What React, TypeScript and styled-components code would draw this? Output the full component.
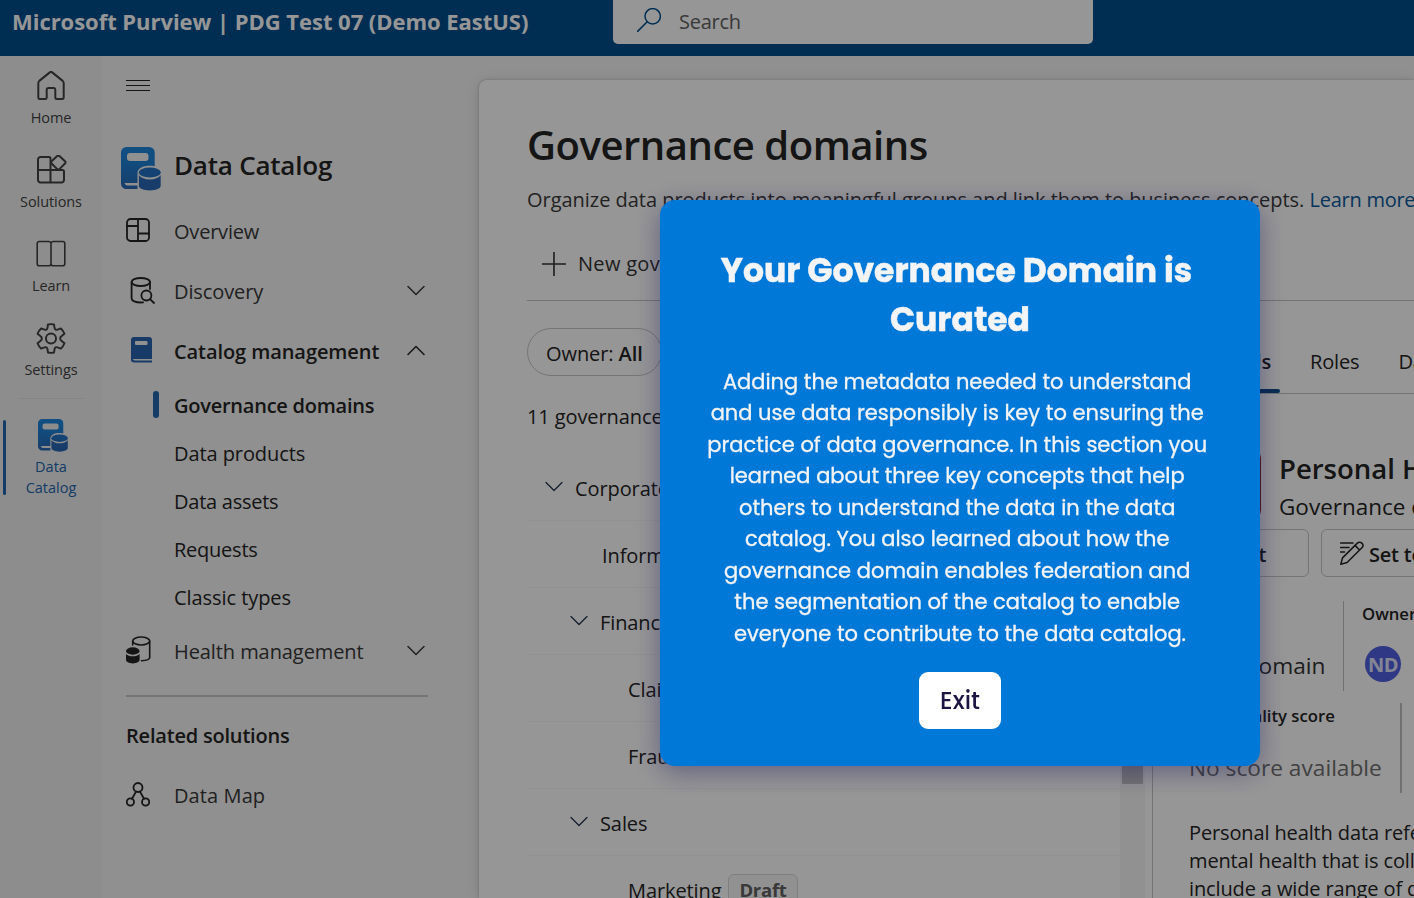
import React from 'react';
import styled, { createGlobalStyle, css } from 'styled-components';

const GlobalStyle = createGlobalStyle`
  *, *::before, *::after { box-sizing: border-box; }
  html, body { margin: 0; height: 100%; overflow: hidden; }
  body {
    font-family: "Segoe UI", "Open Sans", "Noto Sans", sans-serif;
    font-size: 20px;
    color: #242424;
    background: #f5f5f5;
  }
  svg { display: block; flex: none; }
`;

const Page = styled.div`
  display: flex;
  flex-direction: column;
  width: 1414px;
  height: 898px;
  overflow: hidden;
  white-space: nowrap;
`;

/* ---------- header ---------- */

const Header = styled.header`
  display: flex;
  align-items: flex-start;
  flex: none;
  height: 56px;
  padding-left: 12px;
  background: #004e8c;
`;

const Brand = styled.div`
  width: 601px;
  font-size: 22px;
  font-weight: 700;
  line-height: 42px;
  letter-spacing: -0.04px;
  color: #fff;
`;

const SearchBox = styled.div`
  display: flex;
  align-items: center;
  gap: 18px;
  width: 480px;
  height: 44px;
  padding: 0 24px;
  border-radius: 0 0 5px 5px;
  background: #fff;
  color: #616161;
  letter-spacing: -0.25px;

  svg { color: #004e8c; margin-top: -4px; }
  span { margin-top: -2px; }
`;

/* ---------- rail ---------- */

const Body = styled.div`
  display: flex;
  flex: 1;
  min-height: 0;
`;

const Rail = styled.nav`
  display: flex;
  flex-direction: column;
  align-items: center;
  flex: none;
  width: 102px;
  padding-top: 15px;
  background: #f0f0f0;
`;

const RailItem = styled.div`
  display: flex;
  flex-direction: column;
  align-items: center;
  flex: none;
  width: 100%;
  height: 84px;
  font-size: 14.5px;
  line-height: 21px;
  letter-spacing: -0.08px;
  color: #424242;

  svg { margin-bottom: 5px; }
`;

const RailDivider = styled.div`
  flex: none;
  width: 66px;
  height: 1px;
  margin: -9px 0 21px;
  background: #e2e2e2;
`;

const RailActive = styled.div`
  display: flex;
  flex: none;
  width: 100%;
  height: 76px;
  padding-left: 3px;
`;

const RailMarker = styled.div`
  width: 3px;
  height: 75px;
  border-radius: 2px;
  background: #2266ad;
`;

const RailActiveContent = styled.div`
  display: flex;
  flex-direction: column;
  align-items: center;
  flex: 1;
  padding-right: 6px;
  font-size: 14.5px;
  line-height: 21px;
  text-align: center;
  white-space: pre-line;
  color: #2266ad;

  svg { margin: -1px 0 4px 4px; }
`;

/* ---------- side navigation ---------- */

const SideNav = styled.nav`
  flex: none;
  width: 377px;
  padding: 24px 51px 0 24px;
`;

const Product = styled.div`
  display: flex;
  align-items: center;
  gap: 13px;
  height: 44px;
  margin: 55px 0 10px -5px;
  font-size: 26px;
  font-weight: 600;
  letter-spacing: -0.22px;

  span { margin-top: -8px; }
`;

const NavRow = styled.div<{ $bold?: boolean; $spacing?: number }>`
  display: flex;
  align-items: center;
  height: 60px;
  padding-right: 3px;
  font-weight: ${(p) => (p.$bold ? 600 : 400)};
  letter-spacing: ${(p) => p.$spacing ?? 0}px;
  color: ${(p) => (p.$bold ? '#242424' : '#383838')};
`;

const NavIcon = styled.div<{ $shift?: number }>`
  flex: none;
  width: 48px;
  padding-left: ${(p) => p.$shift ?? 0}px;
  margin-top: -2px;
  color: #242424;
`;

const NavLabel = styled.div`
  flex: 1;
`;

const ChevronSlot = styled.div`
  margin-top: -2px;
`;

const SubRow = styled.div<{ $active?: boolean; $spacing?: number }>`
  display: flex;
  align-items: center;
  height: 48px;
  padding-left: ${(p) => (p.$active ? 27 : 48)}px;
  font-weight: ${(p) => (p.$active ? 600 : 400)};
  letter-spacing: ${(p) => p.$spacing ?? 0}px;
`;

const SubMarker = styled.div`
  width: 6px;
  height: 27px;
  margin: -2px 15px 0 0;
  border-radius: 3px;
  background: #2266ad;
`;

const NavDivider = styled.div`
  width: 302px;
  height: 2px;
  margin: 14px 0 8px;
  background: #c8c8c8;
`;

/* ---------- main card ---------- */

const Card = styled.main`
  flex: 1;
  min-width: 0;
  margin-top: 24px;
  padding: 37px 0 0 48px;
  border-top-left-radius: 8px;
  background: #fff;
  box-shadow: 0 0 3px rgba(0, 0, 0, 0.22), 0 2px 14px rgba(0, 0, 0, 0.13);
  overflow: hidden;
`;

const CardTitle = styled.h1`
  margin: 0;
  font-size: 40px;
  font-weight: 600;
  line-height: 56px;
  letter-spacing: -0.47px;
`;

const Intro = styled.p`
  margin: 12px 0 0;
  line-height: 30px;
  letter-spacing: -0.03px;
  color: #3a3a3a;

  a { color: #0b5a9d; letter-spacing: -0.25px; }
`;

const Toolbar = styled.div`
  display: flex;
  align-items: center;
  gap: 12px;
  height: 86px;
  padding: 26px 0 13px 15px;
  border-bottom: 1px solid #c4c4c4;
  letter-spacing: 0.3px;
  color: #333;

  span { margin-top: -2px; }
`;

const Columns = styled.div`
  display: flex;
  height: 597px;
`;

const ListPane = styled.section`
  flex: none;
  width: 593px;
  padding-top: 27px;
`;

const FilterPill = styled.div`
  display: inline-flex;
  align-items: center;
  height: 48px;
  padding: 3px 18px 0;
  border: 1px solid #c8c8c8;
  border-radius: 24px;
  line-height: 30px;
  letter-spacing: -0.08px;

  b { margin-left: 5px; font-weight: 600; }
`;

const Count = styled.div`
  margin: 26px 0 22px;
  line-height: 30px;
  letter-spacing: -0.1px;
`;

const TreeRow = styled.div<{ $indent: number }>`
  display: flex;
  align-items: center;
  gap: 12px;
  height: 67px;
  padding: 2px 0 0 ${(p) => p.$indent}px;
  border-bottom: 1px solid #f6f6f6;
  letter-spacing: -0.1px;
`;

const TreeChevron = styled.div`
  margin-top: -3px;
  color: #1c2f48;
`;

const TreeTag = styled.div`
  height: 33px;
  margin: 1px 0 0 -5px;
  padding: 0 10px;
  border: 1px solid #d8d8d8;
  border-radius: 6px;
  background: #f7f7f7;
  color: #616161;
  font-size: 18.5px;
  font-weight: 700;
  line-height: 29px;
  letter-spacing: -0.25px;
`;

const ScrollTrack = styled.div`
  flex: none;
  width: 25px;
  padding: 150px 2px 0;
  background: #f7f7f7;
`;

const ScrollThumb = styled.div`
  height: 333px;
  background: #c2c2c2;
`;

/* ---------- details pane ---------- */

const Details = styled.section`
  flex: none;
  width: 500px;
  margin-left: 7px;
  border-left: 1px solid #c4c4c4;
  padding-left: 36px;
`;

const Tabs = styled.div`
  display: flex;
  gap: 39px;
  height: 93px;
  padding: 36px 0 0 8px;
  border-bottom: 1px solid #c4c4c4;
  letter-spacing: -0.15px;
`;

const Tab = styled.div<{ $active?: boolean }>`
  position: relative;
  height: 56px;
  line-height: 50px;
  font-weight: ${(p) => (p.$active ? 600 : 400)};
  ${(p) =>
    p.$active &&
    css`
      width: 74px;
      text-align: right;
      &::after {
        content: '';
        position: absolute;
        left: -8px;
        right: -9px;
        bottom: 0;
        height: 4px;
        border-radius: 2px;
        background: #0f4c8c;
      }
    `}
`;

const Entity = styled.div`
  display: flex;
  gap: 18px;
  margin-top: 54px;
  height: 72px;
`;

const EntityIcon = styled.div`
  width: 72px;
  height: 72px;
  border-radius: 10px;
  background: #a4262c;
`;

const EntityName = styled.div`
  margin-top: 2px;
  font-size: 27.5px;
  font-weight: 600;
  line-height: 38px;
`;

const EntityType = styled.div`
  font-size: 22.5px;
  line-height: 38px;
`;

const Actions = styled.div`
  display: flex;
  gap: 12px;
  margin-top: 9px;
`;

const ActionButton = styled.div<{ $width: number; $tight?: boolean }>`
  display: flex;
  align-items: center;
  gap: 5px;
  width: ${(p) => p.$width}px;
  height: 48px;
  padding: 0 0 0 ${(p) => (p.$tight ? 11 : 18)}px;
  border: 1px solid #c8c8c8;
  border-radius: 6px;
  font-weight: 600;
  letter-spacing: -0.2px;

  svg { margin-top: -1px; }
  span { padding-top: 3px; }
`;

const Facts = styled.div`
  display: flex;
  height: 90px;
`;

const Fact = styled.div<{ $width: number; $rule: number }>`
  width: ${(p) => p.$width}px;
  border-right: ${(p) => p.$rule}px solid #c0c0c0;
`;

const FactLabel = styled.div`
  font-size: 16.7px;
  font-weight: 600;
  line-height: 26px;
`;

const FactValue = styled.div<{ $muted?: boolean }>`
  margin-top: 24px;
  font-size: 22.7px;
  line-height: 30px;
  color: ${(p) => (p.$muted ? '#707070' : '#333')};
`;

const FactsFirst = styled(Facts)`
  margin-top: 24px;
`;

const FactsSecond = styled(Facts)`
  margin-top: 12px;
`;

const OwnerFact = styled.div`
  padding-left: 18px;
`;

const Avatar = styled.div`
  width: 36px;
  height: 36px;
  margin: 19px 0 0 3px;
  border-radius: 50%;
  background: #4f5fe0;
  color: #e0e3fa;
  font-size: 20px;
  font-weight: 700;
  line-height: 38px;
  text-align: center;
  letter-spacing: -0.6px;
`;

const Description = styled.p`
  margin: 26px 0 0;
  line-height: 28px;
  letter-spacing: -0.13px;
  white-space: pre-line;
`;

/* ---------- dialog ---------- */

const Overlay = styled.div`
  position: fixed;
  inset: 0;
  background: rgba(0, 0, 0, 0.41);
`;

const Dialog = styled.div`
  position: absolute;
  left: 660px;
  top: 200px;
  display: flex;
  flex-direction: column;
  align-items: center;
  width: 600px;
  height: 566px;
  padding-top: 46px;
  border-radius: 15px;
  background: #0078d7;
  box-shadow: 0 6px 27px rgba(24, 20, 90, 0.42);
  font-family: Poppins, Inter, sans-serif;
  color: #f3f4f6;
  white-space: pre;
`;

const DialogTitle = styled.h2`
  margin: 0;
  font-size: 33px;
  font-weight: 700;
  line-height: 49px;
  text-align: center;
  -webkit-text-stroke: 0.5px currentColor;
`;

const DialogText = styled.p`
  margin: 21.5px 0 0;
  font-size: 21px;
  font-weight: 400;
  line-height: 31.5px;
  text-align: center;
  -webkit-text-stroke: 0.3px currentColor;
`;

const ExitButton = styled.button`
  width: 82px;
  height: 57px;
  margin: 23px 0 0;
  padding: 0;
  border: 0;
  border-radius: 9px;
  background: #fff;
  color: #1c1442;
  font: 500 24px/57px Poppins, Inter, sans-serif;
`;

/* ---------- icons ---------- */

const stroke = { fill: 'none', stroke: 'currentColor', strokeLinecap: 'round', strokeLinejoin: 'round' } as const;

const Chevron = ({ up, thin }: { up?: boolean; thin?: boolean }) => (
  <svg width="18" height="11" viewBox="0 0 18 11" {...stroke} strokeWidth={thin ? 1.2 : 1.5}>
    <path d={up ? 'M1 9.5 9 1.5l8 8' : 'M1 1.5l8 8 8-8'} />
  </svg>
);

const HomeIcon = () => (
  <svg width="30" height="31" viewBox="0 0 30 31" {...stroke} strokeWidth="2">
    <path d="M2.3 12.2c0-.9.4-1.7 1-2.3L13.500 1.600a2.200 2.200 0 0 1 3 0L26.700 9.900c.6.6 1 1.400 1 2.300V26.600c0 .9-.6 1.500-1.400 1.500h-5.600c-.8 0-1.400-.6-1.400-1.500v-8.100c0-.9-.6-1.500-1.400-1.500h-5.800c-.8 0-1.400.6-1.400 1.500v8.100c0 .9-.6 1.500-1.400 1.500H3.700c-.8 0-1.400-.6-1.400-1.500z" />
  </svg>
);

const SolutionsIcon = () => (
  <svg width="32" height="31" viewBox="-1 1 32 31" {...stroke} strokeWidth="2">
    <path d="M14.500 16V4.500a1.500 1.500 0 0 0-1.500-1.500H4.500A2.500 2.500 0 0 0 2 5.500V26a2.500 2.500 0 0 0 2.500 2.500h21A2.500 2.500 0 0 0 28 26v-8.500a1.500 1.500 0 0 0-1.500-1.500H2M14.500 16v12.500" />
    <path d="M21.200 2.100a1.600 1.600 0 0 1 2.200 0l5.600 5.200a1.600 1.600 0 0 1 0 2.200l-5.600 5.600a1.600 1.600 0 0 1-2.200 0l-5.600-5.600a1.600 1.600 0 0 1 0-2.200z" />
  </svg>
);

const LearnIcon = () => (
  <svg width="30" height="31" viewBox="0 0 30 31" {...stroke} strokeWidth="1.6">
    <path d="M15 4.500c0-1.300-1-2-2.300-2H3.200a2 2 0 0 0-2 2v20.300a2 2 0 0 0 2 2h9.500c1.300 0 2.300-.8 2.300-2zM15 4.500c0-1.300 1-2 2.300-2h9.500a2 2 0 0 1 2 2v20.300a2 2 0 0 1-2 2h-9.500c-1.300 0-2.300-.8-2.300-2" />
  </svg>
);

const SettingsIcon = () => (
  <svg width="32" height="31" viewBox="0 0 32 32" {...stroke} strokeWidth="2">
    <circle cx="16" cy="16" r="5.200" />
    <path d="M12.900 1.500a14.700 14.700 0 0 1 6.200 0l.6 3.700a2.200 2.200 0 0 0 3 1.700l3.500-1.300a14.700 14.700 0 0 1 3.700 5.500l-2.900 2.400a2.800 2.800 0 0 0 0 5l2.900 2.400a14.700 14.700 0 0 1-3.700 5.500l-3.500-1.300a2.200 2.200 0 0 0-3 1.700l-.6 3.700a14.700 14.700 0 0 1-6.200 0l-.6-3.700a2.200 2.200 0 0 0-3-1.700l-3.500 1.300a14.700 14.700 0 0 1-3.700-5.500l2.900-2.400a2.800 2.800 0 0 0 0-5l-2.900-2.400a14.700 14.700 0 0 1 3.700-5.500l3.500 1.300a2.200 2.200 0 0 0 3-1.700z" />
  </svg>
);

const CatalogLogo = ({ id, size, gap }: { id: string; size: number; gap: string }) => (
  <svg width={size} height={size * 1.1} viewBox="0 0 40 44">
    <defs>
      <linearGradient id={id} x1="0" y1="0" x2="0" y2="1">
        <stop offset="0" stopColor="#1d87e0" />
        <stop offset="0.4" stopColor="#1f80d4" />
        <stop offset="1" stopColor="#2968b5" />
      </linearGradient>
    </defs>
    <path
      fill={`url(#${id})`}
      fillRule="evenodd"
      d="M5.500 0h22.700a5.500 5.500 0 0 1 5.500 5.500V36H3.500c1 2.400 2.500 2.600 4 2.600h12V42h-14A5.500 5.500 0 0 1 0 36.500v-31A5.500 5.500 0 0 1 5.500 0zM9 6a3 3 0 0 0-3 3v2a3 3 0 0 0 3 3h15.500a3 3 0 0 0 3-3V9a3 3 0 0 0-3-3z"
    />
    <path fill={gap} d="M16.500 26c0-4.500 5-7.200 12.300-7.200S41 21.500 41 26v18H16.500z" />
    <ellipse cx="28.800" cy="25.500" rx="11" ry="5" fill="#2373c4" />
    <path fill="#2968b5" d="M17.900 28.200c2 2.700 6 4.200 10.900 4.200s8.900-1.500 10.900-4.200v10.600c0 2.700-4.900 4.700-10.900 4.700s-10.900-2-10.900-4.700z" />
  </svg>
);

const OverviewIcon = () => (
  <svg width="24" height="24" viewBox="0 0 24 24" {...stroke} strokeWidth="1.800">
    <rect x="1" y="1" width="22" height="22" rx="3.500" />
    <path d="M12 1v22M1 8h11M12 15.500h11" />
  </svg>
);

const DiscoveryIcon = () => (
  <svg width="25" height="27" viewBox="0 0 25 27" {...stroke} strokeWidth="1.800">
    <ellipse cx="10.800" cy="5" rx="9.200" ry="4" />
    <path d="M1.600 5v16.500c0 2.200 4.100 4 9.200 4 .9 0 1.500 0 2.300-.1M20 5v7" />
    <circle cx="16.400" cy="18.500" r="5" />
    <path d="M20 22.200 24 26" />
  </svg>
);

const BookIcon = () => (
  <svg width="21" height="26" viewBox="0 0 21 26">
    <path
      fill="#2763ae"
      fillRule="evenodd"
      d="M3 0h15a3 3 0 0 1 3 3v19H2c.2 1 .8 1.400 1.600 1.400H21V25.500H3a3 3 0 0 1-3-3V3a3 3 0 0 1 3-3zm2 4a1 1 0 0 0-1 1v2a1 1 0 0 0 1 1h10.500a1 1 0 0 0 1-1V5a1 1 0 0 0-1-1z"
    />
  </svg>
);

const HealthIcon = () => (
  <svg width="25" height="28" viewBox="0 0 25 28" {...stroke} strokeWidth="1.600">
    <ellipse cx="15.200" cy="5" rx="8.500" ry="4" />
    <path d="M6.700 5v4M23.700 5v16.500c0 1.600-3.400 3-8.200 3.200" />
    <ellipse cx="6.800" cy="15" rx="6.800" ry="3.700" fill="currentColor" stroke="none" />
    <path d="M0 18c1.500 1.600 4 2.300 6.800 2.300s5.300-.7 6.800-2.300v5.800c0 2-3 3.600-6.800 3.600S0 25.800 0 23.800z" fill="currentColor" stroke="none" />
  </svg>
);

const MapIcon = () => (
  <svg width="24" height="25" viewBox="0 0 24 25" {...stroke} strokeWidth="1.800">
    <circle cx="12" cy="5.500" r="4.500" />
    <circle cx="4.400" cy="20" r="3.600" />
    <circle cx="19.600" cy="20" r="3.600" />
    <path d="M10 9.600 6 16.700M14 9.600l4 7.100" />
  </svg>
);

const SearchIcon = () => (
  <svg width="24" height="24" viewBox="0 0 24 24" {...stroke} strokeWidth="1.500">
    <circle cx="15.700" cy="8.300" r="7.700" />
    <path d="M10.200 13.800.6 23.400" />
  </svg>
);

const PlusIcon = () => (
  <svg width="24" height="24" viewBox="0 0 24 24" {...stroke} strokeLinecap="butt" strokeWidth="1.600">
    <path d="M12 0v24M0 12h24" />
  </svg>
);

const MenuIcon = () => (
  <svg width="24" height="12" viewBox="0 0 24 12" {...stroke} strokeLinecap="butt" strokeWidth="1">
    <path d="M0 .5h24M0 5.500h24M0 10.500h24" />
  </svg>
);

const PencilIcon = () => (
  <svg width="24" height="24" viewBox="0 0 24 24" {...stroke} strokeWidth="1.500">
    <path d="M.8 23.200l1.700-6.300L17.300 2.100a3.200 3.200 0 0 1 4.600 4.600L7.100 21.500zM15 4.400 19.600 9M.5 2h12.500M.5 6.500H9M.5 11h4" />
  </svg>
);

/* ---------- content ---------- */

const railItems = [
  { label: 'Home', icon: <HomeIcon /> },
  { label: 'Solutions', icon: <SolutionsIcon /> },
  { label: 'Learn', icon: <LearnIcon /> },
  { label: 'Settings', icon: <SettingsIcon /> },
];

const subItems = [
  { label: 'Governance domains', spacing: -0.24, active: true },
  { label: 'Data products', spacing: -0.08 },
  { label: 'Data assets', spacing: -0.25 },
  { label: 'Requests', spacing: -0.24 },
  { label: 'Classic types', spacing: -0.06 },
];

const tree = [
  { label: 'Corporate', indent: 18, open: true },
  { label: 'Information', indent: 75 },
  { label: 'Finance', indent: 43, open: true },
  { label: 'Claims', indent: 101 },
  { label: 'Fraud', indent: 101 },
  { label: 'Sales', indent: 43, open: true },
  { label: 'Marketing', indent: 101, tag: 'Draft' },
];

const dialogTitle = 'Your Governance Domain is \nCurated';

const dialogText = [
  'Adding the metadata needed to understand ',
  'and use data responsibly is key to ensuring the ',
  'practice of data governance. In this section you ',
  'learned about three key concepts that help ',
  'others to understand the data in the data ',
  'catalog. You also learned about how the ',
  'governance domain enables federation and ',
  'the segmentation of the catalog to enable ',
  'everyone to contribute to the data catalog.',
].join('\n');

export default function App() {
  return (
    <>
      <GlobalStyle />
      <Page>
        <Header>
          <Brand>Microsoft Purview | PDG Test 07 (Demo EastUS)</Brand>
          <SearchBox>
            <SearchIcon />
            <span>Search</span>
          </SearchBox>
        </Header>
        <Body>
          <Rail>
            {railItems.map((item) => (
              <RailItem key={item.label}>
                {item.icon}
                {item.label}
              </RailItem>
            ))}
            <RailDivider />
            <RailActive>
              <RailMarker />
              <RailActiveContent>
                <CatalogLogo id="railLogo" size={30} gap="#f0f0f0" />
                {'Data\nCatalog'}
              </RailActiveContent>
            </RailActive>
          </Rail>

          <SideNav>
            <MenuIcon />
            <Product>
              <CatalogLogo id="navLogo" size={40} gap="#f5f5f5" />
              <span>Data Catalog</span>
            </Product>
            <NavRow $spacing={-0.21}>
              <NavIcon><OverviewIcon /></NavIcon>
              <NavLabel>Overview</NavLabel>
            </NavRow>
            <NavRow $spacing={-0.1}>
              <NavIcon $shift={4}><DiscoveryIcon /></NavIcon>
              <NavLabel>Discovery</NavLabel>
              <ChevronSlot><Chevron /></ChevronSlot>
            </NavRow>
            <NavRow $bold $spacing={-0.08}>
              <NavIcon $shift={5}><BookIcon /></NavIcon>
              <NavLabel>Catalog management</NavLabel>
              <ChevronSlot><Chevron up /></ChevronSlot>
            </NavRow>
            {subItems.map((item) => (
              <SubRow key={item.label} $active={item.active} $spacing={item.spacing}>
                {item.active && <SubMarker />}
                {item.label}
              </SubRow>
            ))}
            <NavRow $spacing={-0.08}>
              <NavIcon><HealthIcon /></NavIcon>
              <NavLabel>Health management</NavLabel>
              <ChevronSlot><Chevron /></ChevronSlot>
            </NavRow>
            <NavDivider />
            <NavRow $bold $spacing={-0.2}>Related solutions</NavRow>
            <NavRow $spacing={0.1}>
              <NavIcon><MapIcon /></NavIcon>
              <NavLabel>Data Map</NavLabel>
            </NavRow>
          </SideNav>

          <Card>
            <CardTitle>Governance domains</CardTitle>
            <Intro>
              Organize data products into meaningful groups and link them to business concepts. <a>Learn more</a>
            </Intro>
            <Toolbar>
              <PlusIcon />
              <span>New governance domain</span>
            </Toolbar>
            <Columns>
              <ListPane>
                <FilterPill>
                  Owner: <b>All</b>
                </FilterPill>
                <Count>11 governance domains</Count>
                {tree.map((row) => (
                  <TreeRow key={row.label} $indent={row.indent}>
                    {row.open && <TreeChevron><Chevron thin /></TreeChevron>}
                    <span>{row.label}</span>
                    {row.tag && <TreeTag>{row.tag}</TreeTag>}
                  </TreeRow>
                ))}
              </ListPane>
              <ScrollTrack>
                <ScrollThumb />
              </ScrollTrack>
              <Details>
                <Tabs>
                  <Tab $active>Details</Tab>
                  <Tab>Roles</Tab>
                  <Tab>Data</Tab>
                </Tabs>
                <Entity>
                  <EntityIcon />
                  <div>
                    <EntityName>Personal Health</EntityName>
                    <EntityType>Governance domain</EntityType>
                  </div>
                </Entity>
                <Actions>
                  <ActionButton $width={120} $tight>
                    <PencilIcon />
                    <span>Edit</span>
                  </ActionButton>
                  <ActionButton $width={180}>
                    <PencilIcon />
                    <span>Set to draft</span>
                  </ActionButton>
                </Actions>
                <FactsFirst>
                  <Fact $width={155} $rule={1}>
                    <FactLabel>Type</FactLabel>
                    <FactValue>Data domain</FactValue>
                  </Fact>
                  <OwnerFact>
                    <FactLabel>Owner</FactLabel>
                    <Avatar>ND</Avatar>
                  </OwnerFact>
                </FactsFirst>
                <FactsSecond>
                  <Fact $width={213} $rule={2}>
                    <FactLabel>Data quality score</FactLabel>
                    <FactValue $muted>No score available</FactValue>
                  </Fact>
                </FactsSecond>
                <Description>
                  {'Personal health data refers to the\nmental health that is collected\ninclude a wide range of data'}
                </Description>
              </Details>
            </Columns>
          </Card>
        </Body>
      </Page>

      <Overlay>
        <Dialog>
          <DialogTitle>{dialogTitle}</DialogTitle>
          <DialogText>{dialogText}</DialogText>
          <ExitButton>Exit</ExitButton>
        </Dialog>
      </Overlay>
    </>
  );
}
